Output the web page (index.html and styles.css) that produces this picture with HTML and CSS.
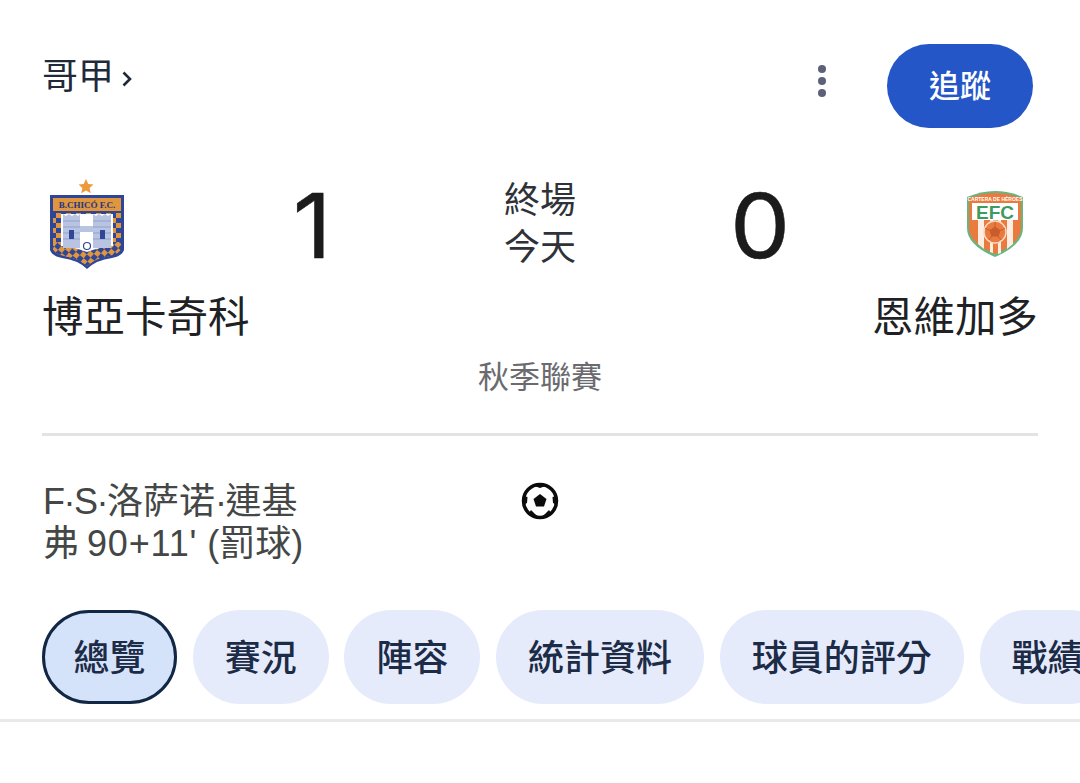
FILE: index.html
```html
<!DOCTYPE html>
<html lang="zh-Hant">
<head>
<meta charset="utf-8">
<title>哥甲</title>
<link rel="stylesheet" href="styles.css">
</head>
<body>
<main class="card">
  <header class="top">
    <div class="league"><span>哥甲</span>
      <svg class="chev" width="10" height="16" viewBox="0 0 10 16"><path d="M1.500 1.500L8 8L1.500 14.500" fill="none" stroke="#1e2a3a" stroke-width="2.600"/></svg>
    </div>
    <div class="dots"><i></i><i></i><i></i></div>
    <button class="follow">追蹤</button>
  </header>

  <section class="match">
    <div class="logo-a">
      <svg width="82" height="92" viewBox="0 0 82 92">
        <defs>
          <pattern id="chk" width="10" height="10" patternUnits="userSpaceOnUse">
            <rect width="10" height="10" fill="#e0963f"/>
            <rect width="5" height="5" fill="#2f4596"/>
            <rect x="5" y="5" width="5" height="5" fill="#2f4596"/>
          </pattern>
          <pattern id="chk2" width="10" height="10" patternUnits="userSpaceOnUse" patternTransform="rotate(40 41 70)">
            <rect width="10" height="10" fill="#e0963f"/>
            <rect width="5" height="5" fill="#2f4596"/>
            <rect x="5" y="5" width="5" height="5" fill="#2f4596"/>
          </pattern>
        </defs>
        <polygon points="40,1 42.300,6 47.500,6.500 43.600,10 44.800,15.200 40,12.500 35.200,15.200 36.400,10 32.500,6.500 37.700,6" fill="#ee9a3a"/>
        <path d="M4 17H78V72Q76 78 66 80Q50 82 41 91Q32 82 16 80Q6 78 4 72Z" fill="#2f4596"/>
        <rect x="7" y="20" width="68" height="13" fill="#e0963f"/>
        <text x="41" y="30" class="crest-a">B.CHICÓ F.C.</text>
        <path d="M7 35H75V71Q73 76 64 78Q50 80 41 88Q32 80 18 78Q9 76 7 71Z" fill="url(#chk)"/>
        <path d="M7 64H75V71Q73 76 64 78Q50 80 41 88Q32 80 18 78Q9 76 7 71Z" fill="url(#chk2)"/>
        <path d="M15 36H67V68Q54 69 41 74Q28 69 15 68Z" fill="#fff"/>
        <path d="M17 36l3 2 3-2 3 2 3-2 3 2 2-2V70H17Z M47 36l3 2 3-2 3 2 3-2 3 2 3-2V70H47Z M34 48H47V54H34Z" fill="#b9c4e2"/>
        <path d="M17 43H34M17 49H34M17 55H34M17 61H34M47 43H65M47 49H65M47 55H65M47 61H65" stroke="#8fa1cf" stroke-width="1"/>
        <path d="M23 52h5v9h-5zM54 52h5v9h-5z" fill="#2f4596"/>
        <circle cx="41" cy="68" r="3.500" fill="#fff" stroke="#2f4596" stroke-width="1.200"/>
      </svg>
    </div>
    <div class="score home">1</div>
    <div class="status"><span>終場</span><span>今天</span></div>
    <div class="score">0</div>
    <div class="logo-b">
      <svg width="58" height="68" viewBox="0 0 58 68">
        <path d="M1 7Q15 1 29 1T57 7V38Q57 55 29 67Q1 55 1 38Z" fill="#66b582"/>
        <path d="M3 8Q16 3 29 3T55 8V38Q55 53 29 64Q3 53 3 38Z" fill="#ea7a3e"/>
        <path d="M12 27h6v32l-6-5zM24 27h3v36l-3-1zM32 27h3v36l-3 1zM41 27h6v27l-6 5z" fill="#fdeee3"/>
        <rect x="6" y="13" width="46" height="17" fill="#fff"/>
        <text x="29" y="10.500" class="crest-b-top">CARTERA DE HÉROES</text>
        <text x="29" y="29" class="crest-b">EFC</text>
        <circle cx="29" cy="42" r="11" fill="#ea7a3e" stroke="#f8d9c4" stroke-width="1.500"/>
        <path d="M29 37l5 3.500-1.800 5.500h-6.400L24 40.500zM29 37v-5M34 40.500l5-2M32 46l3 4M26 46l-3 4M24 40.500l-5-2" fill="#c85c2c" stroke="#c85c2c" stroke-width="1"/>
      </svg>
    </div>
  </section>

  <section class="teams"><span>博亞卡奇科</span><span>恩維加多</span></section>
  <div class="season">秋季聯賽</div>
  <hr class="rule">

  <section class="events">
    <div class="scorer"><span class="tight">F·S·</span>洛萨诺<span class="tight">·</span>連基<br>弗 <span class="wide">90+11'</span> (罰球)</div>
    <svg class="ball" width="38" height="38" viewBox="0 0 38 38">
      <circle cx="19" cy="19" r="16.500" fill="#fff" stroke="#0b0b0b" stroke-width="3.500"/>
      <polygon points="19,12 25.500,16.900 23,24.500 15,24.500 12.500,16.900" fill="#0b0b0b"/>
      <path d="M12 3.500L19 6L26 3.500L19 1ZM3 14L2 23L6 21L6.500 15ZM35 14L36 23L32 21L31.500 15ZM8 31L15 36L20 36.500L14 32L10 28ZM30 31L23 36L18 36.500L24 32L28 28Z" fill="#0b0b0b"/>
    </svg>
  </section>

  <nav class="tabs">
    <a class="tab active">總覽</a>
    <a class="tab">賽況</a>
    <a class="tab">陣容</a>
    <a class="tab">統計資料</a>
    <a class="tab">球員的評分</a>
    <a class="tab">戰績</a>
  </nav>
  <hr class="rule-bottom">
</main>
</body>
</html>
```
FILE: styles.css
```css
* { box-sizing: border-box; }
html, body { margin: 0; height: 100%; background: #fff; overflow: hidden; }
body { font-family: "Roboto", "Noto Sans CJK TC", sans-serif; color: #1f1f1f; }
.card { width: 1080px; padding-top: 44px; }

.top { display: flex; align-items: center; height: 84px; padding: 0 47px 0 42px; }
.league { display: flex; align-items: center; gap: 8px; font-size: 36px; line-height: 46px; color: #1f2a3a; margin-top: -19px; flex: 1; }
.chev { margin-top: 4px; }
.dots { display: flex; flex-direction: column; gap: 4px; margin-right: 61px; margin-top: -10px; }
.dots i { width: 8px; height: 8px; border-radius: 50%; background: #5c6078; display: block; }
.follow { width: 146px; height: 84px; border: 0; border-radius: 42px; background: #2456c8; color: #fff; font: 500 31px/40px "Noto Sans CJK TC", sans-serif; padding: 0 0 5px; }

.match { display: grid; grid-template-columns: 243px 70px 1fr 70px 243px; align-items: start; padding: 0 42px; margin-top: 50px; height: 114px; }
.logo-a { padding-left: 4px; }
.logo-b { display: flex; justify-content: flex-end; padding: 12px 14px 0 0; }
.score { font: 400 90px/92px "Inter", sans-serif; -webkit-text-stroke: 0.500px #1b1b1b; text-align: center; color: #1b1b1b; margin-top: 2px; transform: scaleX(1.06); }
.score.home { padding-right: 15px; }
.status { display: flex; flex-direction: column; align-items: center; font-size: 36px; line-height: 47px; color: #2f3238; }
.crest-a { font: 700 9px "Liberation Serif", serif; text-anchor: middle; fill: #23357f; }
.crest-b { font: 700 19px "Liberation Sans", sans-serif; text-anchor: middle; fill: #3f9a5f; }
.crest-b-top { font: 700 5px "Liberation Sans", sans-serif; text-anchor: middle; fill: #fff; }

.teams { display: flex; justify-content: space-between; padding: 0 42px; font-size: 41.500px; line-height: 54px; margin-top: -1px; color: #202124; }
.season { text-align: center; font-size: 31px; line-height: 40px; color: #6b6b6f; margin-top: 13px; }
.rule { height: 3px; margin: 35px 42px 0; border: 0; background: #e3e3e3; }

.events { display: flex; margin-top: 44px; height: 84px; padding-left: 43px; }
.scorer { width: 478px; font: 36px/42px "Liberation Sans", "Noto Sans CJK TC", sans-serif; color: #444746; margin-top: 1px; }
.tight { letter-spacing: -1.500px; }
.wide { letter-spacing: 0.800px; margin-left: -2px; }
.ball { margin-top: 2px; }

.tabs { display: flex; gap: 15.700px; padding-left: 42px; margin-top: 46px; height: 94px; width: 1080px; overflow: hidden; }
.tab { flex: none; height: 94px; display: flex; align-items: center; padding: 0 32px 5px; border-radius: 47px; background: #e6ebfc; font: 500 36px "Noto Sans CJK TC", sans-serif; color: #1c2b46; }
.tab.active { background: #d5e3fa; border: 3px solid #122744; padding: 0 28.500px 5px; }
.rule-bottom { height: 3px; margin: 15px 0 0; border: 0; background: #e9e9e9; }
```
